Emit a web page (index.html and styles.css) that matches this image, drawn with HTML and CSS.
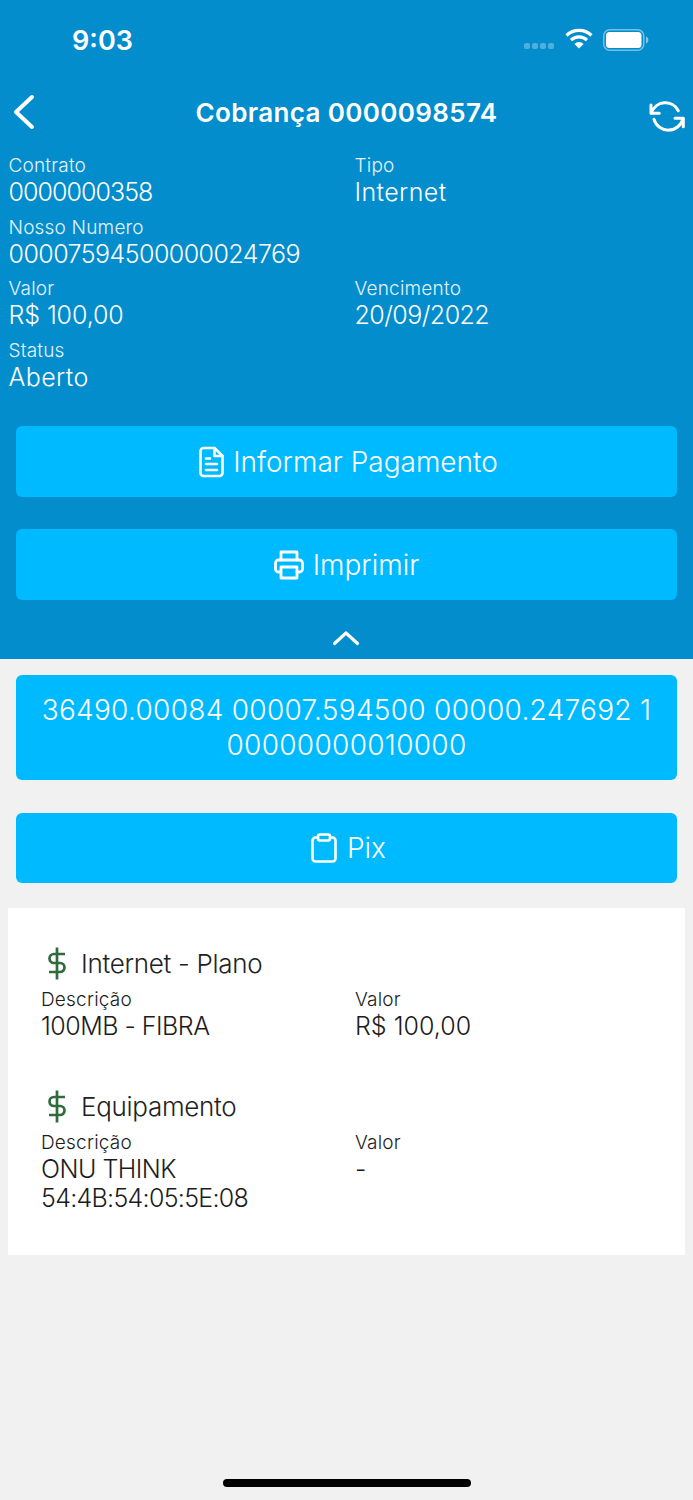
FILE: index.html
```html
<!DOCTYPE html>
<html lang="pt-BR">
    <head>
        <meta charset="UTF-8" />
        <title>Cobrança 0000098574</title>
        <link rel="stylesheet" href="styles.css">
    </head>

    <body>
        <section class="top">
            <div class="status">
                <div class="time">9:03</div>
                <div class="status-icons">
                    <div class="signal"><i></i><i></i><i></i><i></i></div>
                    <svg class="wifi" width="28" height="22" viewBox="0 0 28 22">
                        <path d="M1.5 7.5a18 18 0 0 1 25 0" fill="none" stroke="#fff" stroke-width="3.2"/>
                        <path d="M6 12.2a11.5 11.5 0 0 1 16 0" fill="none" stroke="#fff" stroke-width="3.2"/>
                        <path d="M14 20.5l-4.6-4.6a6.5 6.5 0 0 1 9.2 0z" fill="#fff"/>
                    </svg>
                    <svg class="battery" width="46" height="22" viewBox="0 0 46 22">
                        <rect x="0.75" y="0.75" width="40" height="20.5" rx="6" fill="none" stroke="#fff" stroke-opacity="0.45" stroke-width="1.5"/>
                        <rect x="3" y="3" width="35.5" height="16" rx="3.5" fill="#fff"/>
                        <path d="M43 7.5c1.6.6 2.4 1.9 2.4 3.500s-.8 2.900-2.400 3.500z" fill="#fff" fill-opacity="0.5"/>
                    </svg>
                </div>
            </div>

            <div class="nav">
                <svg class="back" width="24" height="36" viewBox="0 0 24 36">
                    <path d="M21 3L5 18l16 15" fill="none" stroke="#fff" stroke-width="4" stroke-linecap="round" stroke-linejoin="round"/>
                </svg>
                <h1 class="title">Cobrança 0000098574</h1>
                <svg class="refresh" width="38" height="34" viewBox="0 0 38 34">
                    <g fill="none" stroke="#fff" stroke-width="3" stroke-linecap="round" stroke-linejoin="round">
                        <path d="M3 5v8.300h8.300"/>
                        <path d="M3.500 13A14.500 14.500 0 0 1 30.300 10.700"/>
                        <path d="M35.300 26.700v-8.400H27"/>
                        <path d="M35 18.600A15 15 0 0 1 6 19.300"/>
                    </g>
                </svg>
            </div>

            <div class="info">
                <div class="field"><div class="label">Contrato</div><div class="value short">0000000358</div></div>
                <div class="field"><div class="label">Tipo</div><div class="value">Internet</div></div>
                <div class="field wide"><div class="label">Nosso Numero</div><div class="value num">00007594500000024769</div></div>
                <div class="field"><div class="label">Valor</div><div class="value money">R$ 100,00</div></div>
                <div class="field"><div class="label">Vencimento</div><div class="value num">20/09/2022</div></div>
                <div class="field wide"><div class="label">Status</div><div class="value">Aberto</div></div>
            </div>

            <div class="actions">
                <div class="btn wide-text">
                    <svg width="25" height="32" viewBox="0 0 25 32">
                        <g fill="none" stroke="#fff" stroke-width="2.600" stroke-linecap="round" stroke-linejoin="round">
                            <path d="M15.500 2H4.500A3 3 0 0 0 1.500 5v22a3 3 0 0 0 3 3h16a3 3 0 0 0 3-3V10z"/>
                            <path d="M15.500 2v8h8"/>
                            <path d="M7 12.500h4M7 18h11M7 24h11"/>
                        </g>
                    </svg>
                    <span>Informar Pagamento</span>
                </div>
                <div class="btn">
                    <svg width="30" height="30" viewBox="0 0 30 30">
                        <g fill="none" stroke="#fff" stroke-width="2.800" stroke-linecap="round" stroke-linejoin="round">
                            <path d="M7 10V2h16v8"/>
                            <path d="M7 22H4.500a3 3 0 0 1-3-3v-6a3 3 0 0 1 3-3h21a3 3 0 0 1 3 3v6a3 3 0 0 1-3 3H23"/>
                            <path d="M7 17h16v11H7z"/>
                        </g>
                    </svg>
                    <span>Imprimir</span>
                </div>
            </div>

            <svg class="collapse" width="28" height="16" viewBox="0 0 28 16">
                <path d="M2.500 13.500L14 3l11.500 10.500" fill="none" stroke="#fff" stroke-width="3.200" stroke-linecap="round" stroke-linejoin="round"/>
            </svg>
        </section>

        <section class="payment">
            <div class="btn code">36490.00084 00007.594500 00000.247692 1 00000000010000</div>
            <div class="btn pix">
                <svg width="26" height="30" viewBox="0 0 26 30">
                    <g fill="none" stroke="#fff" stroke-width="2.600" stroke-linecap="round" stroke-linejoin="round">
                        <path d="M7 4.500H4.500a3 3 0 0 0-3 3v18a3 3 0 0 0 3 3h17a3 3 0 0 0 3-3v-18a3 3 0 0 0-3-3H19"/>
                        <rect x="7" y="1.500" width="12" height="6" rx="2"/>
                    </g>
                </svg>
                <span>Pix</span>
            </div>
        </section>

        <section class="card">
            <div class="item">
                <div class="item-title">
                    <svg width="22" height="33" viewBox="0 0 22 33">
                        <path d="M11 0.500v32M19 7H8a4.500 4.500 0 0 0 0 9h6a4.500 4.500 0 0 1 0 9H3" fill="none" stroke="#2f6b3c" stroke-width="2.700"/>
                    </svg>
                    <span>Internet - Plano</span>
                </div>
                <div class="item-row">
                    <div><div class="item-label">Descrição</div><div class="item-value">100MB - FIBRA</div></div>
                    <div><div class="item-label">Valor</div><div class="item-value money">R$ 100,00</div></div>
                </div>
            </div>
            <div class="item">
                <div class="item-title">
                    <svg width="22" height="33" viewBox="0 0 22 33">
                        <path d="M11 0.500v32M19 7H8a4.500 4.500 0 0 0 0 9h6a4.500 4.500 0 0 1 0 9H3" fill="none" stroke="#2f6b3c" stroke-width="2.700"/>
                    </svg>
                    <span>Equipamento</span>
                </div>
                <div class="item-row">
                    <div><div class="item-label">Descrição</div><div class="item-value">ONU THINK<br><span class="mac">54:4B:54:05:5E:08</span></div></div>
                    <div><div class="item-label">Valor</div><div class="item-value">-</div></div>
                </div>
            </div>
        </section>

        <div class="home-bar"></div>
    </body>
</html>
```

FILE: styles.css
```css
* {
    margin: 0;
    padding: 0;
    box-sizing: border-box;
}

body {
    width: 693px;
    height: 1500px;
    background: #f1f1f1;
    font-family: "Inter", "Liberation Sans", sans-serif;
    position: relative;
    overflow: hidden;
}

.top {
    height: 659px;
    background: #038dcd;
    color: #fff;
}

.status {
    height: 80px;
    display: flex;
    justify-content: space-between;
    padding: 0 44px 0 72px;
    align-items: center;
}

.time {
    font-size: 27px;
    font-weight: 600;
}

.status-icons {
    display: flex;
    align-items: center;
}

.signal {
    display: flex;
    gap: 2px;
    margin: 12px 11px 0 0;
}

.signal i {
    width: 6px;
    height: 6px;
    border-radius: 2px;
    background: rgba(255, 255, 255, 0.3);
}

.wifi {
    margin: -2px 10px 0 0;
}

.nav {
    height: 64px;
    display: flex;
    align-items: center;
    justify-content: space-between;
    padding: 0 7px 0 11px;
}

.title {
    font-size: 26px;
    font-weight: 600;
    letter-spacing: 0.35px;
    margin-left: 10px;
}

.refresh {
    margin-top: 10px;
}

.info {
    display: grid;
    grid-template-columns: 346px 1fr;
    padding: 10px 0 0 8.5px;
    font-weight: 300;
}

.field {
    height: 61.5px;
}

.field.wide {
    grid-column: 1 / 3;
}

.label {
    font-size: 19px;
    line-height: 24px;
    letter-spacing: 0.2px;
    color: #e4f2f9;
}

.value {
    font-size: 25px;
    line-height: 28px;
    letter-spacing: 0.4px;
}

.value.num {
    letter-spacing: -0.55px;
}

.value.short {
    letter-spacing: -0.95px;
}

.value.money {
    letter-spacing: -0.1px;
}

.actions {
    display: flex;
    flex-direction: column;
    gap: 32px;
    padding: 26px 16px 0;
}

.btn {
    height: 71px;
    border-radius: 6px;
    background: #00baff;
    color: #fff;
    font-size: 28px;
    font-weight: 300;
    display: flex;
    align-items: center;
    justify-content: center;
    gap: 9px;
}

.btn.wide-text {
    padding-left: 4px;
}

.collapse {
    display: block;
    margin: 30px auto 0;
    transform: translateX(-1px);
}

.payment {
    display: flex;
    flex-direction: column;
    gap: 33px;
    padding: 16px 16px 0;
}

.btn.code {
    height: 105px;
    padding: 0 20px;
    text-align: center;
    line-height: 35px;
    letter-spacing: 0.3px;
}

.btn.pix {
    height: 70px;
    padding-left: 4px;
    gap: 10px;
}

.card {
    margin: 25px 8px 0;
    height: 347px;
    background: #fff;
    padding: 37px 33px 0;
    color: #1c1c1c;
}

.item {
    height: 143px;
}

.item-title {
    display: flex;
    align-items: center;
    gap: 13px;
    height: 36px;
    font-size: 26px;
    font-weight: 300;
    letter-spacing: -0.3px;
    color: #222;
    padding-left: 5px;
}

.item-row {
    display: grid;
    grid-template-columns: 314px 1fr;
    margin-top: 7px;
}

.item-label {
    font-size: 19px;
    font-weight: 300;
    line-height: 24px;
    letter-spacing: 0.2px;
}

.item-value {
    font-size: 25px;
    font-weight: 300;
    line-height: 29px;
    letter-spacing: -0.5px;
}

.item-value.money {
    letter-spacing: 0;
}

.mac {
    letter-spacing: -0.7px;
}

.home-bar {
    position: absolute;
    left: 223px;
    top: 1479px;
    width: 248px;
    height: 8px;
    border-radius: 4px;
    background: #000;
}
```
